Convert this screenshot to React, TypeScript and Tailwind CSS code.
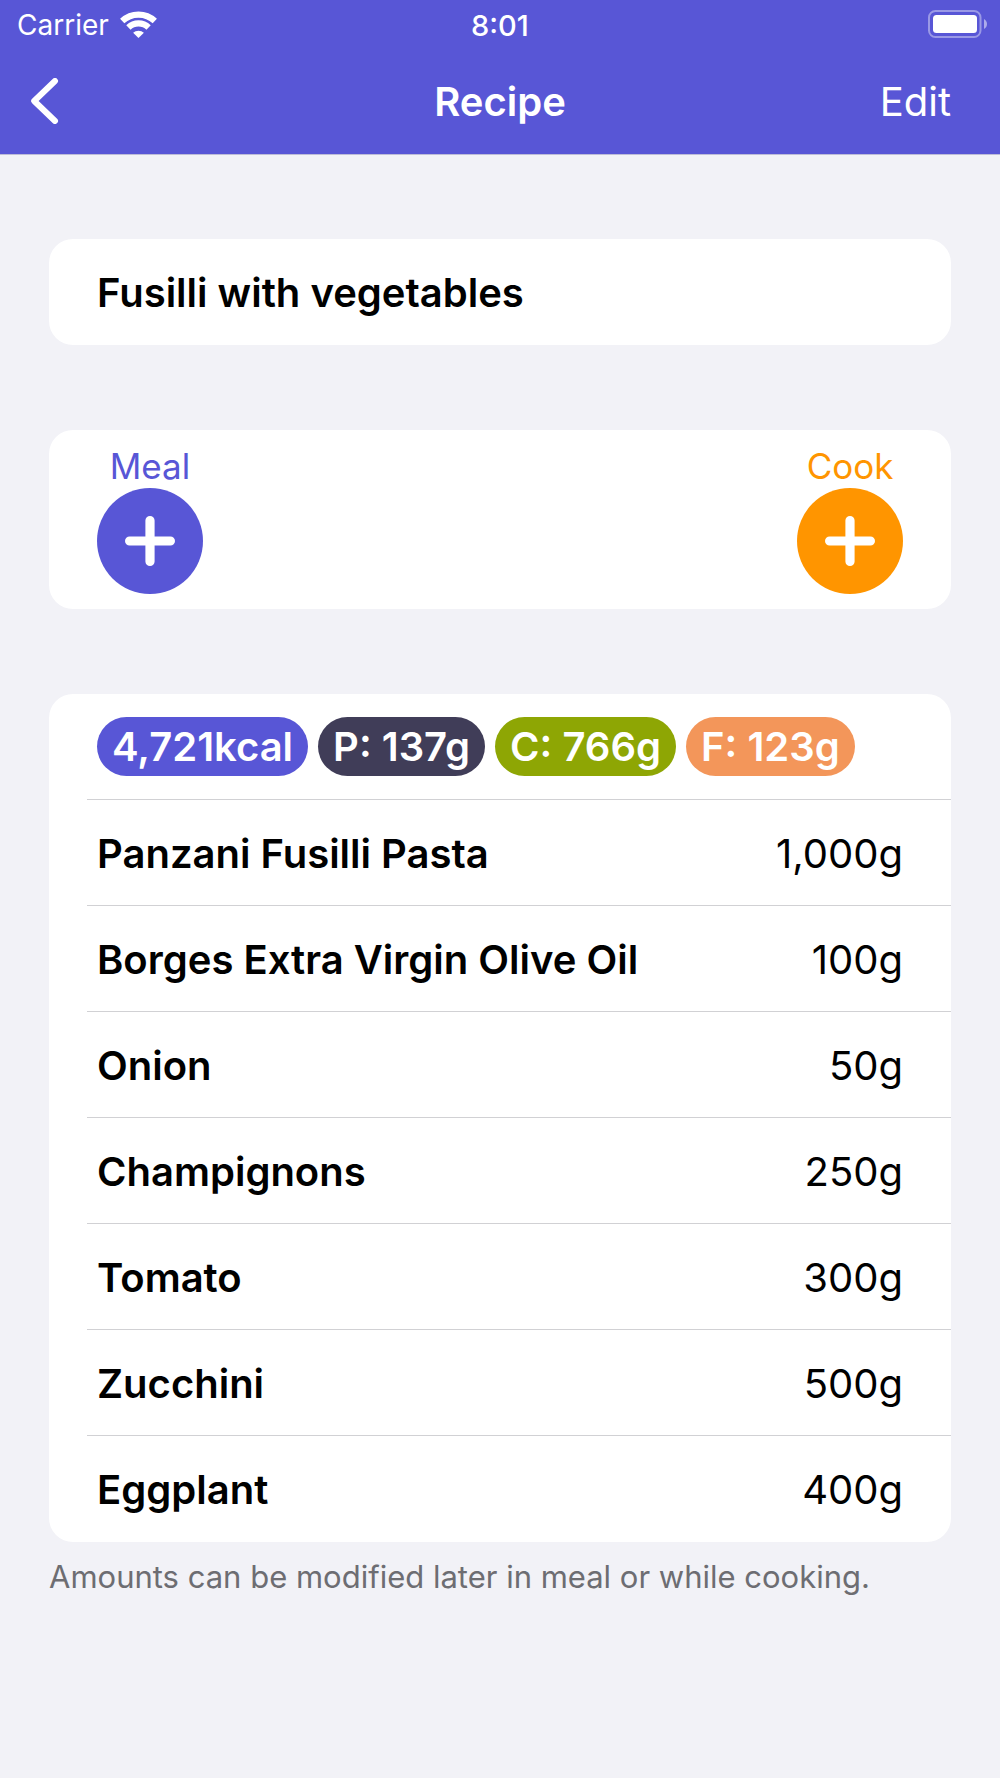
import React from 'react';

const WifiIcon: React.FC = () => (
  <svg width="37" height="27" viewBox="0 0 37 27" fill="none" aria-hidden="true">
    <path d="M2.2 10A23.9 23.9 0 0 1 34.8 10" stroke="white" strokeWidth="6.2" />
    <path d="M8.4 16.5A14.6 14.6 0 0 1 28.6 16.5" stroke="white" strokeWidth="6.2" />
    <path d="M18.5 27L13.1 21.8A7.8 7.8 0 0 1 23.9 21.8Z" fill="white" />
  </svg>
);

const BatteryIcon: React.FC = () => (
  <svg width="59" height="28" viewBox="0 0 59 28" fill="none" aria-hidden="true">
    <rect x="1" y="1" width="51.5" height="26" rx="6.5" stroke="white" strokeOpacity="0.4" strokeWidth="2" />
    <rect x="5" y="5" width="44" height="18" rx="3.5" fill="white" />
    <path d="M56 9C58 10 59 12 59 14C59 16 58 18 56 19Z" fill="white" fillOpacity="0.5" />
  </svg>
);

const PlusIcon: React.FC = () => (
  <svg width="50" height="50" viewBox="0 0 50 50" fill="none" aria-hidden="true">
    <path d="M25 4.6V45.4M4.6 25H45.4" stroke="white" strokeWidth="9.2" strokeLinecap="round" />
  </svg>
);

const Header: React.FC = () => (
  <header className="bg-[#5856d6] text-white border-b border-[#bdbcd8]">
    <div className="grid grid-cols-3 items-center h-[48px] px-[13px] text-[28px] leading-none">
      <div className="flex items-center gap-[11px] pl-1">
        <span className="pt-[2px]">Carrier</span>
        <WifiIcon />
      </div>
      <span className="pt-[2px] text-center text-[29px] font-medium">8:01</span>
      <div className="flex justify-end">
        <BatteryIcon />
      </div>
    </div>
    <div className="grid grid-cols-3 items-center h-[106px] px-[30px] text-[40px] leading-none">
      <button type="button" aria-label="Back" className="justify-self-start">
        <svg width="29" height="46" viewBox="0 0 29 46" fill="none" aria-hidden="true">
          <path d="M25 3L4.2 23L25 43" stroke="white" strokeWidth="6" strokeLinecap="round" strokeLinejoin="round" />
        </svg>
      </button>
      <h1 className="pt-[2px] text-center font-semibold">Recipe</h1>
      <button type="button" className="justify-self-end pt-[2px] pr-[19px]">Edit</button>
    </div>
  </header>
);

const macros = [
  { label: '4,721kcal', color: 'bg-[#5856d6]' },
  { label: 'P: 137g', color: 'bg-[#403d58]' },
  { label: 'C: 766g', color: 'bg-[#8ea604]' },
  { label: 'F: 123g', color: 'bg-[#f3965a]' },
];

const ingredients = [
  { name: 'Panzani Fusilli Pasta', amount: '1,000g' },
  { name: 'Borges Extra Virgin Olive Oil', amount: '100g' },
  { name: 'Onion', amount: '50g' },
  { name: 'Champignons', amount: '250g' },
  { name: 'Tomato', amount: '300g' },
  { name: 'Zucchini', amount: '500g' },
  { name: 'Eggplant', amount: '400g' },
];

const App: React.FC = () => {
  return (
    <div className="min-h-screen bg-[#f2f2f7] font-['Inter',sans-serif] text-black">
      <Header />

      <main className="flex flex-col gap-[85px] px-[49px] pt-[84px] pb-12">
        <section className="flex items-center h-[106px] px-[48px] rounded-[24px] bg-white">
          <h2 className="pt-[2px] text-[40px] leading-none font-semibold">Fusilli with vegetables</h2>
        </section>

        <section className="flex justify-between px-[48px] pt-[15px] pb-[15px] rounded-[24px] bg-white">
          <button type="button" className="flex flex-col items-center text-[35px] leading-[43px] text-[#5856d6]">
            Meal
            <span className="flex items-center justify-center size-[106px] rounded-full bg-[#5856d6]">
              <PlusIcon />
            </span>
          </button>
          <button type="button" className="flex flex-col items-center text-[35px] leading-[43px] text-[#ff9500]">
            Cook
            <span className="flex items-center justify-center size-[106px] rounded-full bg-[#ff9500]">
              <PlusIcon />
            </span>
          </button>
        </section>

        <section>
          <div className="pl-[38px] rounded-[24px] bg-white">
            <div className="flex items-center gap-[10px] h-[105px] pl-[10px]">
              {macros.map((macro) => (
                <span
                  key={macro.label}
                  className={`${macro.color} px-[15px] rounded-full text-[40px] leading-[59px] font-semibold text-white whitespace-nowrap`}
                >
                  {macro.label}
                </span>
              ))}
            </div>
            <table className="w-full text-[40px] leading-none">
              <tbody>
                {ingredients.map((item) => (
                  <tr key={item.name} className="h-[106px] border-t border-[#d1d1d4]">
                    <th scope="row" className="pt-[3px] pl-[10px] text-left font-semibold">{item.name}</th>
                    <td className="pt-[3px] pr-[48px] text-right">{item.amount}</td>
                  </tr>
                ))}
              </tbody>
            </table>
          </div>
          <p className="pt-[16px] text-[31px] leading-[38px] text-[#6d6d72]">
            Amounts can be modified later in meal or while cooking.
          </p>
        </section>
      </main>
    </div>
  );
};

export default App;
